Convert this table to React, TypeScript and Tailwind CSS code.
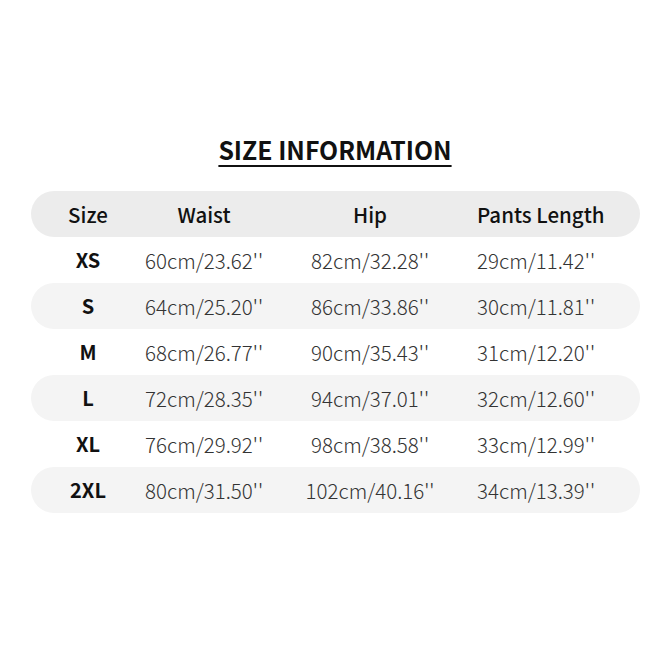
const rows = [
  ["XS", "60cm/23.62''", "82cm/32.28''", "29cm/11.42''"],
  ["S", "64cm/25.20''", "86cm/33.86''", "30cm/11.81''"],
  ["M", "68cm/26.77''", "90cm/35.43''", "31cm/12.20''"],
  ["L", "72cm/28.35''", "94cm/37.01''", "32cm/12.60''"],
  ["XL", "76cm/29.92''", "98cm/38.58''", "33cm/12.99''"],
  ["2XL", "80cm/31.50''", "102cm/40.16''", "34cm/13.39''"],
];

const cols = "grid grid-cols-[114px_118px_214px_118px] items-center whitespace-nowrap";

export default function App() {
  return (
    <div
      className="w-[670px] h-[670px] bg-white flex flex-col items-center pt-[132px]"
      style={{ fontFamily: '"Noto Sans CJK SC", "Noto Sans", sans-serif' }}
    >
      <h1 className="text-[24.8px] font-bold text-[#111] underline underline-offset-[5px] decoration-2 leading-[34px]">
        SIZE INFORMATION
      </h1>

      <div className="w-[609px] mt-[25px] ml-[1px]">
        {/* header */}
        <div className={`${cols} h-[46px] rounded-full bg-[#ececec] text-[20.5px] font-medium text-[#111]`}>
          <div className="text-center">Size</div>
          <div className="text-center">Waist</div>
          <div className="text-center">Hip</div>
          <div className="text-center">Pants Length</div>
        </div>

        {rows.map((r, i) => (
          <div
            key={r[0]}
            className={`${cols} h-[46px] rounded-full text-[20.5px] text-[#333] ${i % 2 === 1 ? "bg-[#f4f4f4]" : ""}`}
          >
            <div className="text-center font-bold text-[20px] text-[#111]">{r[0]}</div>
            <div className="text-center font-light">{r[1]}</div>
            <div className="text-center font-light">{r[2]}</div>
            <div className="text-center font-light">{r[3]}</div>
          </div>
        ))}
      </div>
    </div>
  );
}
